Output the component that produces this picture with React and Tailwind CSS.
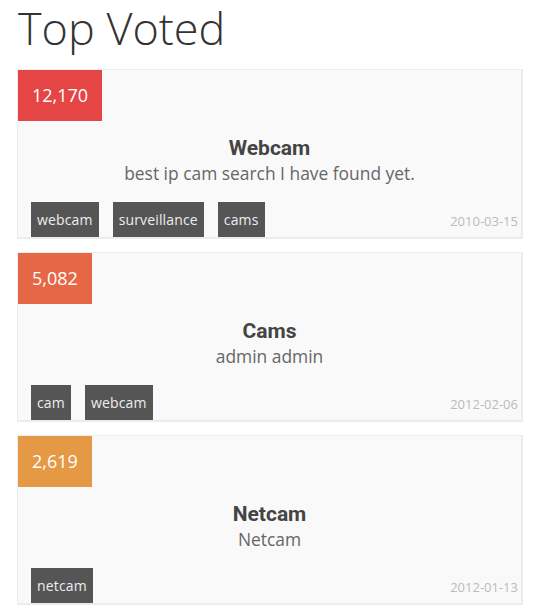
const ITEMS = [
  {
    votes: '12,170',
    color: 'bg-[#e64545]',
    title: 'Webcam',
    desc: 'best ip cam search I have found yet.',
    tags: ['webcam', 'surveillance', 'cams'],
    date: '2010-03-15',
  },
  {
    votes: '5,082',
    color: 'bg-[#e66745]',
    title: 'Cams',
    desc: 'admin admin',
    tags: ['cam', 'webcam'],
    date: '2012-02-06',
  },
  {
    votes: '2,619',
    color: 'bg-[#e59944]',
    title: 'Netcam',
    desc: 'Netcam',
    tags: ['netcam'],
    date: '2012-01-13',
  },
];

function VoteCard({ item }) {
  return (
    <div className="flex flex-col border-t border-l border-r-2 border-b-2 border-[#ececec] bg-[#f9f9f9]">
      <div className="flex">
        <div className={`flex h-[51px] items-center px-[14px] text-[18px] text-white ${item.color}`}>
          {item.votes}
        </div>
      </div>
      <div className="mt-[15px] text-center">
        <h2 className="font-['Roboto',sans-serif] text-[21px] font-bold leading-[25px] text-[#444]">{item.title}</h2>
        <p className="text-[17.4px] leading-[24px] text-[#666]">{item.desc}</p>
      </div>
      <div className="mt-[17px] flex items-end justify-between pl-[13px] pr-[3px]">
        <div className="flex gap-[14px]">
          {item.tags.map((tag) => (
            <span key={tag} className="flex h-[35px] items-center bg-[#555] px-[6px] text-[14px] tracking-[0.15px] text-[#eee]">
              {tag}
            </span>
          ))}
        </div>
        <span className="mb-[7px] text-[13px] leading-[18px] text-[#bbb]">{item.date}</span>
      </div>
    </div>
  );
}

export default function App() {
  return (
    <div className="min-h-screen bg-white pt-[1px] font-['Open_Sans',sans-serif]">
      <div className="ml-[17px] w-[506px]">
        <h1 className="mb-[10px] -mt-[4px] pl-[1px] text-[45px] font-light leading-[62px] text-[#333]">
          Top Voted
        </h1>
        <div className="flex flex-col gap-[13px]">
          {ITEMS.map((item) => (
            <VoteCard key={item.title} item={item} />
          ))}
        </div>
      </div>
    </div>
  );
}
